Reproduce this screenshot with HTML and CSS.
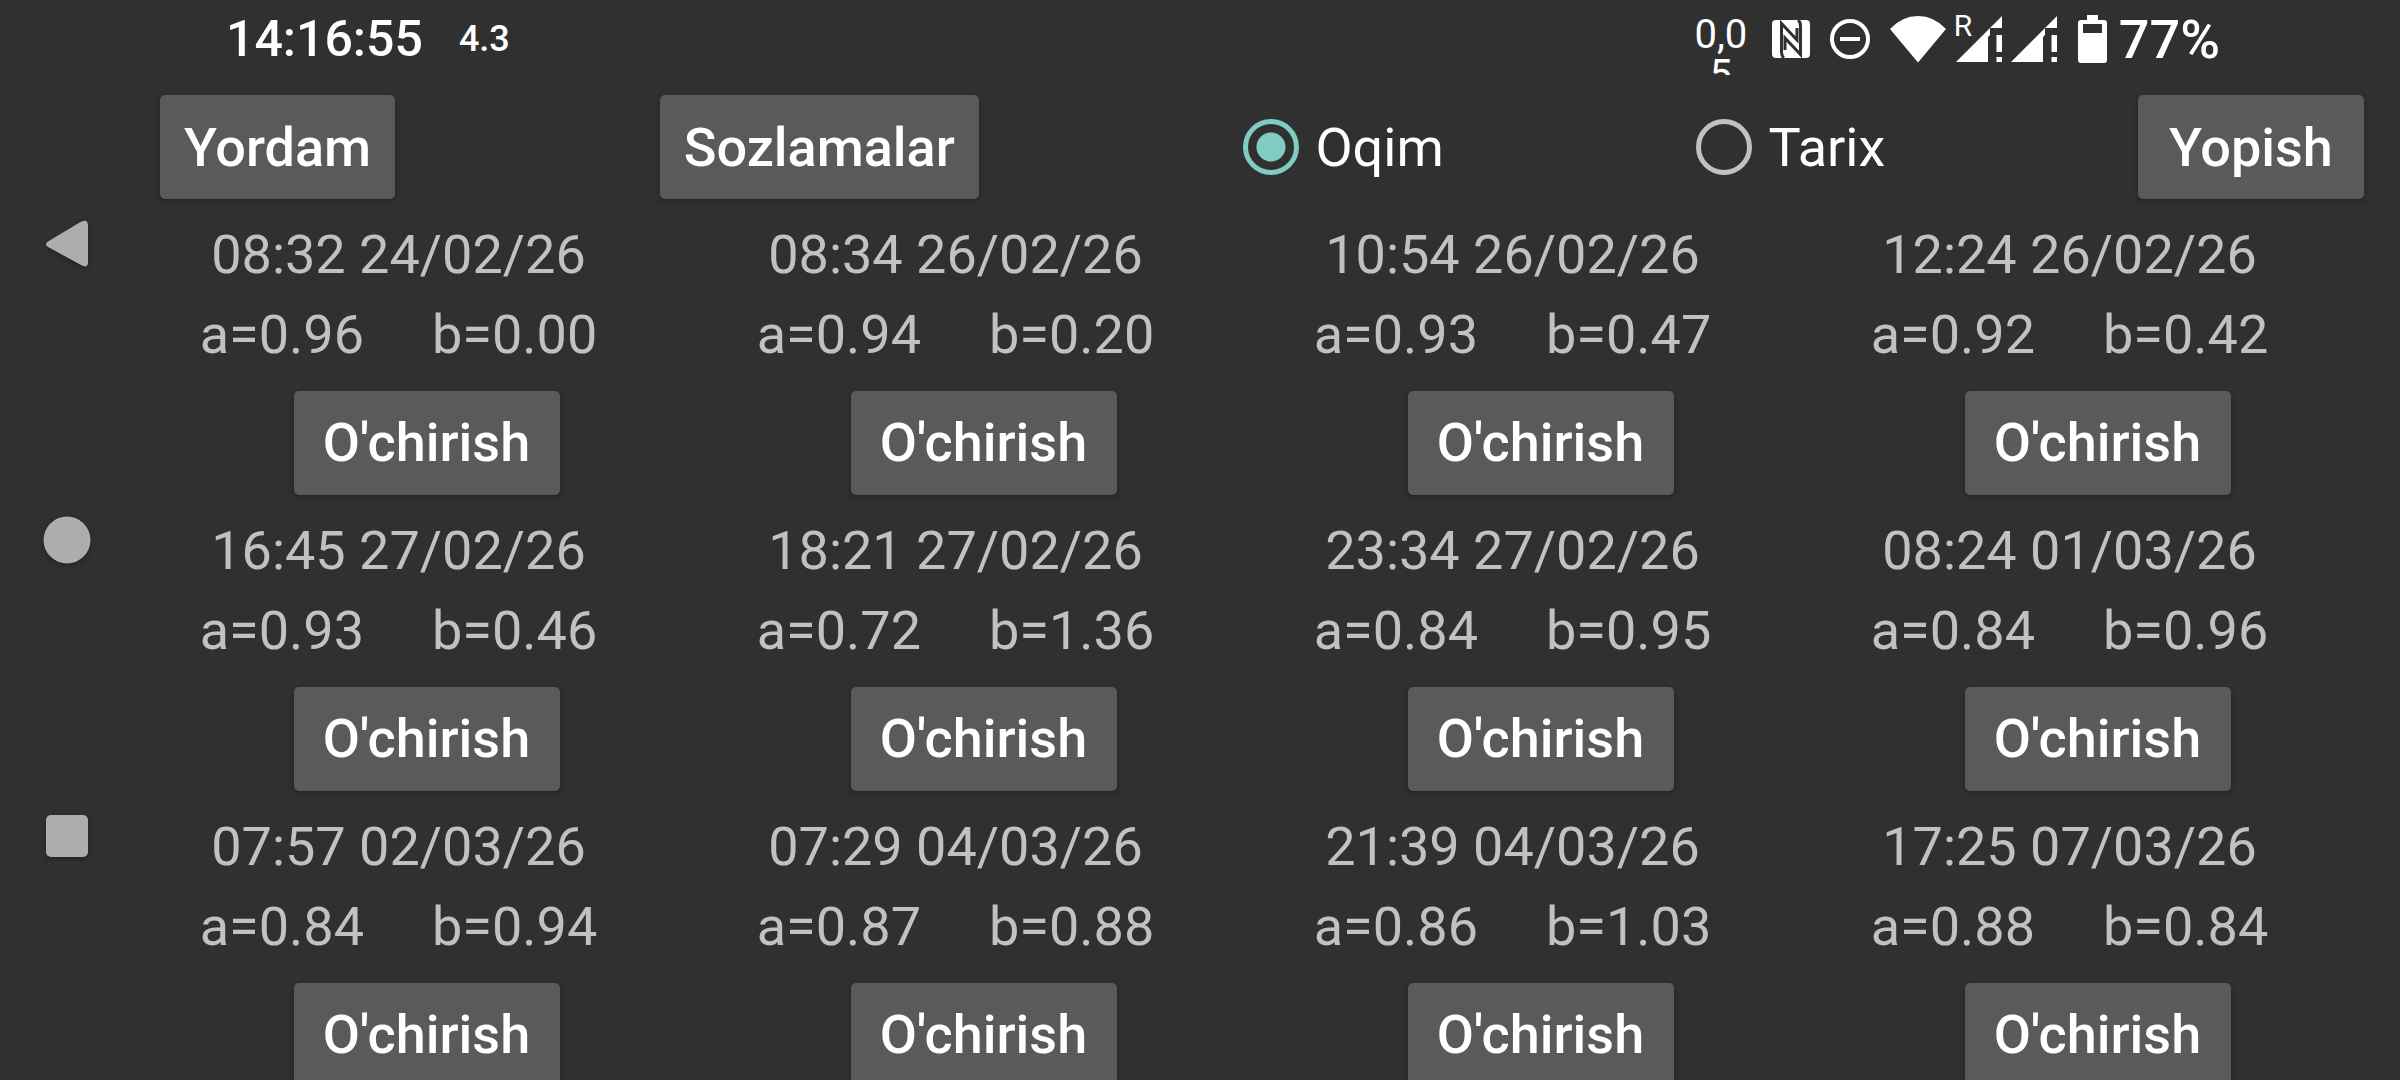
FILE: index.html
```html
<!DOCTYPE html>
<html lang="uz">
<head>
    <meta charset="UTF-8">
    <meta name="viewport" content="width=device-width, initial-scale=1.0">
    <title>Oqim</title>
    <link rel="stylesheet" href="styles.css">
</head>
<body>
    <div class="screen">
        <!-- System navigation -->
        <nav class="nav-bar">
            <button class="nav-btn" aria-label="Orqaga">
                <svg width="48" height="52" viewBox="0 0 48 52"><path d="M5 23.500 37 4.300Q45 0 45 8V44Q45 51 38 47L5 29Q1 26 5 23.500Z"/></svg>
            </button>
            <button class="nav-btn" aria-label="Bosh ekran">
                <svg width="48" height="48" viewBox="0 0 48 48"><circle cx="24" cy="24" r="23.500"/></svg>
            </button>
            <button class="nav-btn" aria-label="Ilovalar">
                <svg width="48" height="48" viewBox="0 0 48 48"><rect x="3" y="3" width="42" height="42" rx="5"/></svg>
            </button>
        </nav>

        <!-- Status bar -->
        <header class="status-bar">
            <span class="clock">14:16:55</span>
            <span class="version">4.3</span>
            <div class="status-icons">
                <span class="speed">0,05</span>
                <svg class="nfc" width="38" height="38" viewBox="0 0 38 38">
                    <rect width="38" height="38" rx="4"/>
                    <path class="cut" d="M12 38C9 36 9.500 33 9.500 30V3.500L25 20V8M26 0C29 2 28.500 5 28.500 8V34.500L13 18V30"/>
                </svg>
                <svg class="dnd" width="40" height="40" viewBox="0 0 40 40">
                    <circle cx="20" cy="20" r="18"/>
                    <path d="M10 20H30"/>
                </svg>
                <svg class="wifi" width="56" height="48" viewBox="0 0 56 48"><path d="M0 14Q12 1 28 1T56 14L28 47.500Z"/></svg>
                <div class="signals">
                    <span class="roaming">R</span>
                    <svg width="47" height="48" viewBox="0 0 47 48"><path d="M46 1V13H34ZM34 13V20L32 22V47H0ZM40.500 20H46V37H40.500ZM40.500 42H46V47H40.500Z"/></svg>
                    <svg width="47" height="48" viewBox="0 0 47 48"><path d="M46 1V13H34ZM34 13V20L32 22V47H0ZM40.500 20H46V37H40.500ZM40.500 42H46V47H40.500Z"/></svg>
                </div>
                <svg class="battery" width="29" height="48" viewBox="0 0 29 48"><path fill-rule="evenodd" d="M9 0H20V5H26Q29 5 29 8V45Q29 48 26 48H3Q0 48 0 45V8Q0 5 3 5H9ZM5 9V18H24V9Z"/></svg>
                <span class="percent">77%</span>
            </div>
        </header>

        <main class="content">
            <div class="toolbar">
                <button class="btn">Yordam</button>
                <button class="btn">Sozlamalar</button>
                <label class="option"><input type="radio" name="mode" checked>Oqim</label>
                <label class="option"><input type="radio" name="mode">Tarix</label>
                <button class="btn btn-close">Yopish</button>
            </div>

            <div class="records">
                <div class="record">
                    <p>08:32 24/02/26</p>
                    <p class="values"><span>a=0.96</span><span>b=0.00</span></p>
                    <button class="btn">O'chirish</button>
                </div>
                <div class="record">
                    <p>08:34 26/02/26</p>
                    <p class="values"><span>a=0.94</span><span>b=0.20</span></p>
                    <button class="btn">O'chirish</button>
                </div>
                <div class="record">
                    <p>10:54 26/02/26</p>
                    <p class="values"><span>a=0.93</span><span>b=0.47</span></p>
                    <button class="btn">O'chirish</button>
                </div>
                <div class="record">
                    <p>12:24 26/02/26</p>
                    <p class="values"><span>a=0.92</span><span>b=0.42</span></p>
                    <button class="btn">O'chirish</button>
                </div>
                <div class="record">
                    <p>16:45 27/02/26</p>
                    <p class="values"><span>a=0.93</span><span>b=0.46</span></p>
                    <button class="btn">O'chirish</button>
                </div>
                <div class="record">
                    <p>18:21 27/02/26</p>
                    <p class="values"><span>a=0.72</span><span>b=1.36</span></p>
                    <button class="btn">O'chirish</button>
                </div>
                <div class="record">
                    <p>23:34 27/02/26</p>
                    <p class="values"><span>a=0.84</span><span>b=0.95</span></p>
                    <button class="btn">O'chirish</button>
                </div>
                <div class="record">
                    <p>08:24 01/03/26</p>
                    <p class="values"><span>a=0.84</span><span>b=0.96</span></p>
                    <button class="btn">O'chirish</button>
                </div>
                <div class="record">
                    <p>07:57 02/03/26</p>
                    <p class="values"><span>a=0.84</span><span>b=0.94</span></p>
                    <button class="btn">O'chirish</button>
                </div>
                <div class="record">
                    <p>07:29 04/03/26</p>
                    <p class="values"><span>a=0.87</span><span>b=0.88</span></p>
                    <button class="btn">O'chirish</button>
                </div>
                <div class="record">
                    <p>21:39 04/03/26</p>
                    <p class="values"><span>a=0.86</span><span>b=1.03</span></p>
                    <button class="btn">O'chirish</button>
                </div>
                <div class="record">
                    <p>17:25 07/03/26</p>
                    <p class="values"><span>a=0.88</span><span>b=0.84</span></p>
                    <button class="btn">O'chirish</button>
                </div>
            </div>
        </main>
    </div>
</body>
</html>
```
FILE: styles.css
```css
* {
    margin: 0;
    padding: 0;
    box-sizing: border-box;
}
body {
    background: #303030;
    color: #fff;
    font-family: Roboto, sans-serif;
    font-size: 54px;
}
button, input {
    font: inherit;
    color: inherit;
    border: none;
}
svg {
    display: block;
    fill: #fff;
}
.screen {
    display: grid;
    grid-template-columns: 134px 1fr;
    grid-template-rows: auto 1fr;
    height: 100vh;
    overflow: hidden;
}

/* Navigation */
.nav-bar {
    grid-row: 1 / 3;
    display: flex;
    flex-direction: column;
    align-items: center;
    justify-content: center;
    gap: 200px;
}
.nav-btn {
    display: flex;
    align-items: center;
    justify-content: center;
    width: 96px;
    height: 96px;
    background: none;
    cursor: pointer;
}
.nav-btn svg {
    fill: #adadad;
    filter: drop-shadow(0 2px 2px rgba(0, 0, 0, 0.3));
}

/* Status bar */
.status-bar {
    display: flex;
    align-items: center;
    height: 78px;
    padding: 0 180px 0 92px;
    font-size: 50px;
    font-weight: 500;
}
.version {
    margin-left: 36px;
    font-size: 36px;
}
.status-icons {
    display: flex;
    align-items: center;
    gap: 20px;
    margin-left: auto;
}
.speed {
    width: 62px;
    height: 60px;
    margin-top: 12px;
    overflow: hidden;
    font-size: 40px;
    font-weight: 400;
    line-height: 40px;
    text-align: center;
    word-break: break-all;
}
.nfc .cut {
    fill: none;
    stroke: #303030;
    stroke-width: 3;
}
.dnd {
    fill: none;
    stroke: #fff;
    stroke-width: 4;
}
.signals {
    position: relative;
    display: flex;
    gap: 8px;
    margin-left: -10px;
}
.roaming {
    position: absolute;
    top: -4px;
    left: -2px;
    font-size: 30px;
    font-weight: 400;
    line-height: 30px;
}
.percent {
    margin-left: -8px;
    font-size: 54px;
}

/* Content */
.content {
    display: flex;
    flex-direction: column;
    padding: 5px 24px 0 14px;
    overflow: hidden;
}
.toolbar {
    display: flex;
    align-items: center;
    justify-content: space-between;
}
.btn {
    height: 104px;
    margin: 12px;
    padding: 0 24px;
    background: #5a595b;
    color: #fff;
    border-radius: 5px;
    box-shadow: 0 2px 5px rgba(0, 0, 0, 0.3);
    font-weight: 500;
    cursor: pointer;
}
.btn-close {
    min-width: 226px;
}
.option {
    display: flex;
    align-items: center;
    gap: 16px;
    margin-left: 12px;
    cursor: pointer;
}
.option input {
    appearance: none;
    width: 56px;
    height: 56px;
    border: 5px solid #c1c1c1;
    border-radius: 50%;
}
.option input:checked {
    border-color: #80cbc4;
    background: radial-gradient(circle, #80cbc4 14px, transparent 15px);
}
.records {
    display: grid;
    grid-template-columns: repeat(4, 1fr);
}
.record {
    display: flex;
    flex-direction: column;
    align-items: center;
    padding-top: 4px;
    color: #c1c1c1;
    line-height: 80px;
}
.record p {
    padding-right: 56px;
}
.record .values {
    display: flex;
    gap: 68px;
}
.record .btn {
    min-width: 266px;
    margin-top: 16px;
}
```
